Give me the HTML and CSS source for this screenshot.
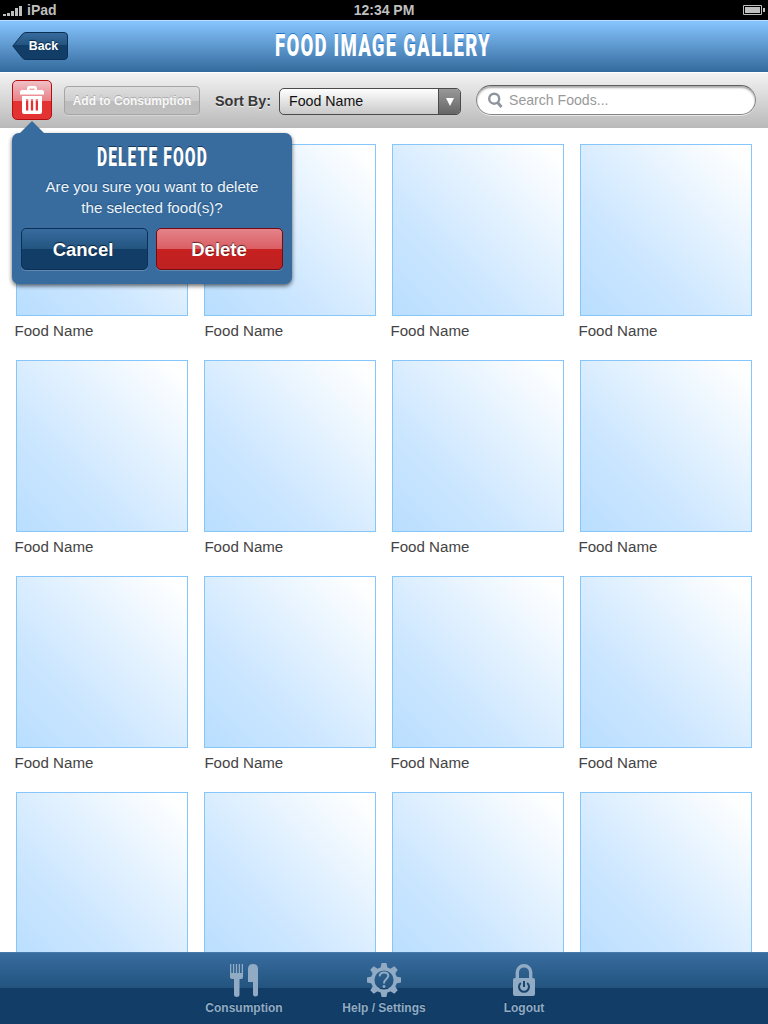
FILE: index.html
```html
<!DOCTYPE html>
<html lang="en">
<head>
<meta charset="utf-8">
<title>Food Image Gallery</title>
<link rel="stylesheet" href="styles.css">
</head>
<body>
<div class="app">
  <div class="status">
    <div class="carrier">
      <svg width="20" height="11" fill="#bfbfbf"><path d="M0 9h3v2H0zM4 8h3v3H4zM8 6h3v5H8zM12 3h3v8h-3zM16 1h3v10h-3z"/></svg>
      <span>iPad</span>
    </div>
    <div class="clock">12:34 PM</div>
    <svg class="battery" width="22" height="10"><path d="M.5.5h18v9H.5z" fill="none" stroke="#bfbfbf"/><path d="M2 2h15v6H2zM20 3h2v4h-2z" fill="#bfbfbf"/></svg>
  </div>

  <header class="header">
    <button class="back">
      <svg width="56" height="29" viewBox="0 0 56 29">
        <defs><linearGradient id="navy" x1="0" y1="0" x2="0" y2="1"><stop offset="0" stop-color="#386c9f"/><stop offset=".47" stop-color="#23547f"/><stop offset=".47" stop-color="#113d67"/><stop offset="1" stop-color="#113d67"/></linearGradient></defs>
        <path d="M.8 14 10.500 2Q12 .5 14 .5H52Q55.500.5 55.500 4V24Q55.500 27.500 52 27.500H14Q12 27.500 10.500 26Z" fill="url(#navy)" stroke="#0c3055"/>
      </svg>
      <span>Back</span>
    </button>
    <svg class="title" width="230" height="34"><text class="display title-text" transform="translate(6 28) scale(.6 1)" textLength="358">FOOD IMAGE GALLERY</text></svg>
  </header>

  <div class="toolbar">
    <button class="trash">
      <svg width="24" height="28" viewBox="0 0 24 28"><path d="M7 4V2.500Q7 0 9.500 0h5Q17 0 17 2.500V4h5q2 0 2 2v2.500H0V6q0-2 2-2ZM9.500 4h5V2.500h-5ZM2 10h20v16q0 2-2 2H4q-2 0-2-2ZM6 13v11.500h2.300V13ZM10.850 13v11.500h2.300V13ZM15.700 13v11.500h2.300V13Z" fill="#fff" fill-rule="evenodd"/></svg>
    </button>
    <button class="add">Add to Consumption</button>
    <span class="sort">Sort By:</span>
    <div class="select"><span>Food Name</span><i><svg width="8" height="8"><path d="M0 0h8L4 8z" fill="#fff"/></svg></i></div>
    <div class="search">
      <svg width="15" height="16" fill="none" stroke="#8d949d"><circle cx="6.200" cy="6.700" r="5" stroke-width="2.400"/><path d="m9.500 10.500 4 4.500" stroke-width="2.800"/></svg>
      <span>Search Foods...</span>
    </div>
    <section class="popover">
      <svg class="arrow" width="24" height="12"><path d="M0 12 12 0l12 12z" fill="#386c9f"/></svg>
      <svg class="pop-title" width="130" height="28"><text class="display pop-text" transform="translate(10 23) scale(.6 1)" textLength="183">DELETE FOOD</text></svg>
      <p>Are you sure you want to delete<br>the selected food(s)?</p>
      <div class="actions"><button class="cancel">Cancel</button><button class="delete">Delete</button></div>
    </section>
  </div>

  <main class="gallery">
    <figure><div></div><figcaption>Food Name</figcaption></figure>
    <figure><div></div><figcaption>Food Name</figcaption></figure>
    <figure><div></div><figcaption>Food Name</figcaption></figure>
    <figure><div></div><figcaption>Food Name</figcaption></figure>
    <figure><div></div><figcaption>Food Name</figcaption></figure>
    <figure><div></div><figcaption>Food Name</figcaption></figure>
    <figure><div></div><figcaption>Food Name</figcaption></figure>
    <figure><div></div><figcaption>Food Name</figcaption></figure>
    <figure><div></div><figcaption>Food Name</figcaption></figure>
    <figure><div></div><figcaption>Food Name</figcaption></figure>
    <figure><div></div><figcaption>Food Name</figcaption></figure>
    <figure><div></div><figcaption>Food Name</figcaption></figure>
    <figure><div></div></figure>
    <figure><div></div></figure>
    <figure><div></div></figure>
    <figure><div></div></figure>
  </main>

  <nav class="tabs">
    <a class="tab">
      <svg width="36" height="36" viewBox="0 0 36 36" fill="#91abc4"><path d="M4 2h1.300v9h1.600V2h1.300v9h1.600V2h1.300v9h1.600V2H14v9h1.700V2H17v13q0 2-2 2h-1.500v16q0 2-2.700 2T8 33V17H6q-2 0-2-2ZM22 20V7q0-5 5-5t5 5v25q0 2.500-2.500 2.500T27 32V20Z"/></svg>
      <span>Consumption</span>
    </a>
    <a class="tab">
      <svg width="36" height="36" viewBox="-18 -18 36 36"><g fill="#91abc4"><g id="teeth"><path id="tooth" d="M-3.500-12-2.400-17H2.400L3.500-12ZM-3.500 12-2.400 17H2.400L3.500 12Z"/><use href="#tooth" transform="rotate(90)"/></g><use href="#teeth" transform="rotate(45)"/></g><circle r="11.300" fill="none" stroke="#91abc4" stroke-width="3.400"/><path d="M-4.300-3.700Q-4-7.400 0-7.400T4.300-4.200C4.300-1.300 0-1 0 3.600" fill="none" stroke="#91abc4" stroke-width="2"/><path d="M-1.300 5.200h2.600v2.600h-2.600z" fill="#91abc4"/></svg>
      <span>Help / Settings</span>
    </a>
    <a class="tab">
      <svg width="36" height="36" viewBox="0 0 36 36"><path d="M11.300 17V10.400a6.700 6.700 0 0 1 13.400 0V17" fill="none" stroke="#91abc4" stroke-width="3.400"/><rect x="7" y="16" width="22" height="18" rx="2" fill="#91abc4"/><path d="M14.800 21a5 5 0 1 0 6.400 0M18 19v6" fill="none" stroke="#18446e" stroke-width="2"/></svg>
      <span>Logout</span>
    </a>
  </nav>
</div>
</body>
</html>
```
FILE: styles.css
```css
* { box-sizing: border-box; }
body { margin: 0; background: #fff; font-family: "Liberation Sans", Arial, sans-serif; }
button { padding: 0; margin: 0; font: inherit; border: 0; background: none; }
svg { display: block; flex: none; }
.app { width: 768px; height: 1024px; display: flex; flex-direction: column; overflow: hidden; }

.status { flex: none; height: 20px; background: #000; color: #bfbfbf; font-size: 14px; font-weight: bold; display: grid; grid-template-columns: 1fr auto 1fr; align-items: center; padding: 0 3px; }
.carrier { display: flex; align-items: center; gap: 4px; }
.battery { justify-self: end; }

.header { flex: none; height: 52px; padding: 12px 12px 0; display: grid; grid-template-columns: 1fr 230px 1fr; background: linear-gradient(#87c5ff, #336a9c); border-top: 1px solid #b8dcff; }
.back { display: grid; width: 56px; height: 29px; margin-top: -1px; font-size: 12.3px; font-weight: bold; color: #fff; text-shadow: 0 -1px 1px #082a4a; }
.back > * { grid-area: 1 / 1; }
.back span { align-self: center; padding: 0 0 1px 7px; z-index: 1; }
.title { margin-top: -5px; overflow: visible; }
.display { font-family: Roboto, sans-serif; font-weight: 900; fill: #fff; }
.title-text { font-size: 31px; text-shadow: 0 -1px 0 #1d76cc; }
.pop-text { font-size: 26px; text-shadow: 0 -1px 0 #17395b; }

.toolbar { position: relative; flex: none; height: 56px; padding: 8px 12px 0; display: flex; align-items: flex-start; background: linear-gradient(#f3f3f3, #b9b9b9); border-top: 1px solid #fff; }
.trash { width: 40px; height: 40px; margin-top: -1px; border: 1px solid #b50d10; border-radius: 5px; display: flex; justify-content: center; padding-top: 5px; background: linear-gradient(#efc0c6, #e88087 52%, #e33231 52%, #e23433); }
.add { width: 136px; height: 29px; margin: 5px 0 0 12px; border: 1px solid #a5a5a5; border-radius: 4px; background: linear-gradient(#dedede, #cecece 50%, #bdbdbd 50%, #bfbfbf); color: #f8f8f8; font-size: 12px; font-weight: bold; text-shadow: 0 -1px 0 #aaa; box-shadow: 0 1px 0 #d5d5d5; white-space: nowrap; }
.sort { width: 64px; margin: 11px 0 0 15px; font-size: 14.4px; line-height: 18px; font-weight: bold; color: #383838; text-shadow: 0 1px 0 #eee; white-space: nowrap; }
.select { width: 182px; height: 27px; margin-top: 7px; border: 1px solid #4a4a4a; border-radius: 5px; display: flex; justify-content: space-between; overflow: hidden; background: linear-gradient(#fff, #c9c9c9); color: #111; font-size: 14.2px; line-height: 25px; padding-left: 9px; }
.select i { width: 22px; border-left: 1px solid #4a4a4a; background: linear-gradient(#999, #666); display: flex; align-items: center; justify-content: center; padding-top: 1px; }
.search { width: 280px; height: 30px; margin: 4px 0 0 15px; border: 1px solid #858585; border-top-color: #606060; border-radius: 15px; background: #fff; box-shadow: inset 0 2px 2px #aaa, 0 1px 0 #e8e8e8; display: flex; align-items: center; gap: 6px; padding-left: 11px; color: #999; font-size: 14.1px; }

.popover { position: absolute; z-index: 2; left: 12px; top: 60px; width: 280px; height: 151px; border-radius: 7px; background: #386c9f; box-shadow: 0 2px 4px rgba(0,0,0,.6); display: flex; flex-direction: column; align-items: center; padding-top: 10px; color: #fff; }
.arrow { position: absolute; left: 8px; top: -12px; }
.pop-title { overflow: visible; }
.popover p { margin: 5px 0 0; font-size: 15.2px; letter-spacing: -.02px; line-height: 21px; text-align: center; color: #edf4fa; text-shadow: 0 -1px 1px #204c75; white-space: nowrap; }
.actions { display: flex; gap: 8px; margin-top: 10px; }
.actions button { width: 127px; height: 42px; border-radius: 5px; font-size: 18.5px; font-weight: bold; color: #fff; text-shadow: 0 -1px 1px rgba(0,0,0,.6); box-shadow: 0 1px 0 #6089b1; padding-top: 1px; }
.actions .cancel { border: 1px solid #0c3055; background: linear-gradient(#386c9f, #23547f 50%, #113d67 50%, #113d67); padding-right: 3px; }
.actions .delete { border: 1px solid #760a10; background: linear-gradient(#e38489, #da5e64 50%, #c72020 50%, #bd2222); padding-right: 1px; }

.gallery { flex: 1; min-height: 0; overflow: hidden; display: grid; grid-template-columns: repeat(4, 172px); grid-auto-rows: 216px; column-gap: 16px; padding: 16px 16px 0; align-content: start; }
figure { margin: 0; }
figure div { height: 172px; border: 1px solid #87c6fa; background: linear-gradient(45deg, #b9deff, #cbe6ff 32%, #fff 95%); }
figcaption { font-size: 15.1px; line-height: 18px; margin: 6px 0 0 -1.500px; color: #444; }
figure:nth-child(4n + 2) figcaption { margin-left: .4px; }

.tabs { flex: none; height: 72px; display: flex; justify-content: center; background: linear-gradient(#386c9f, #23547f 49%, #113d67 49%, #113d67); border-top: 1px solid #477aab; padding: 9px 0 0; }
.tab { width: 140px; display: flex; flex-direction: column; align-items: center; color: #91abc4; font-size: 12px; font-weight: bold; line-height: 14px; gap: 3px; text-shadow: 0 -1px 1px #082a4a; }
```
